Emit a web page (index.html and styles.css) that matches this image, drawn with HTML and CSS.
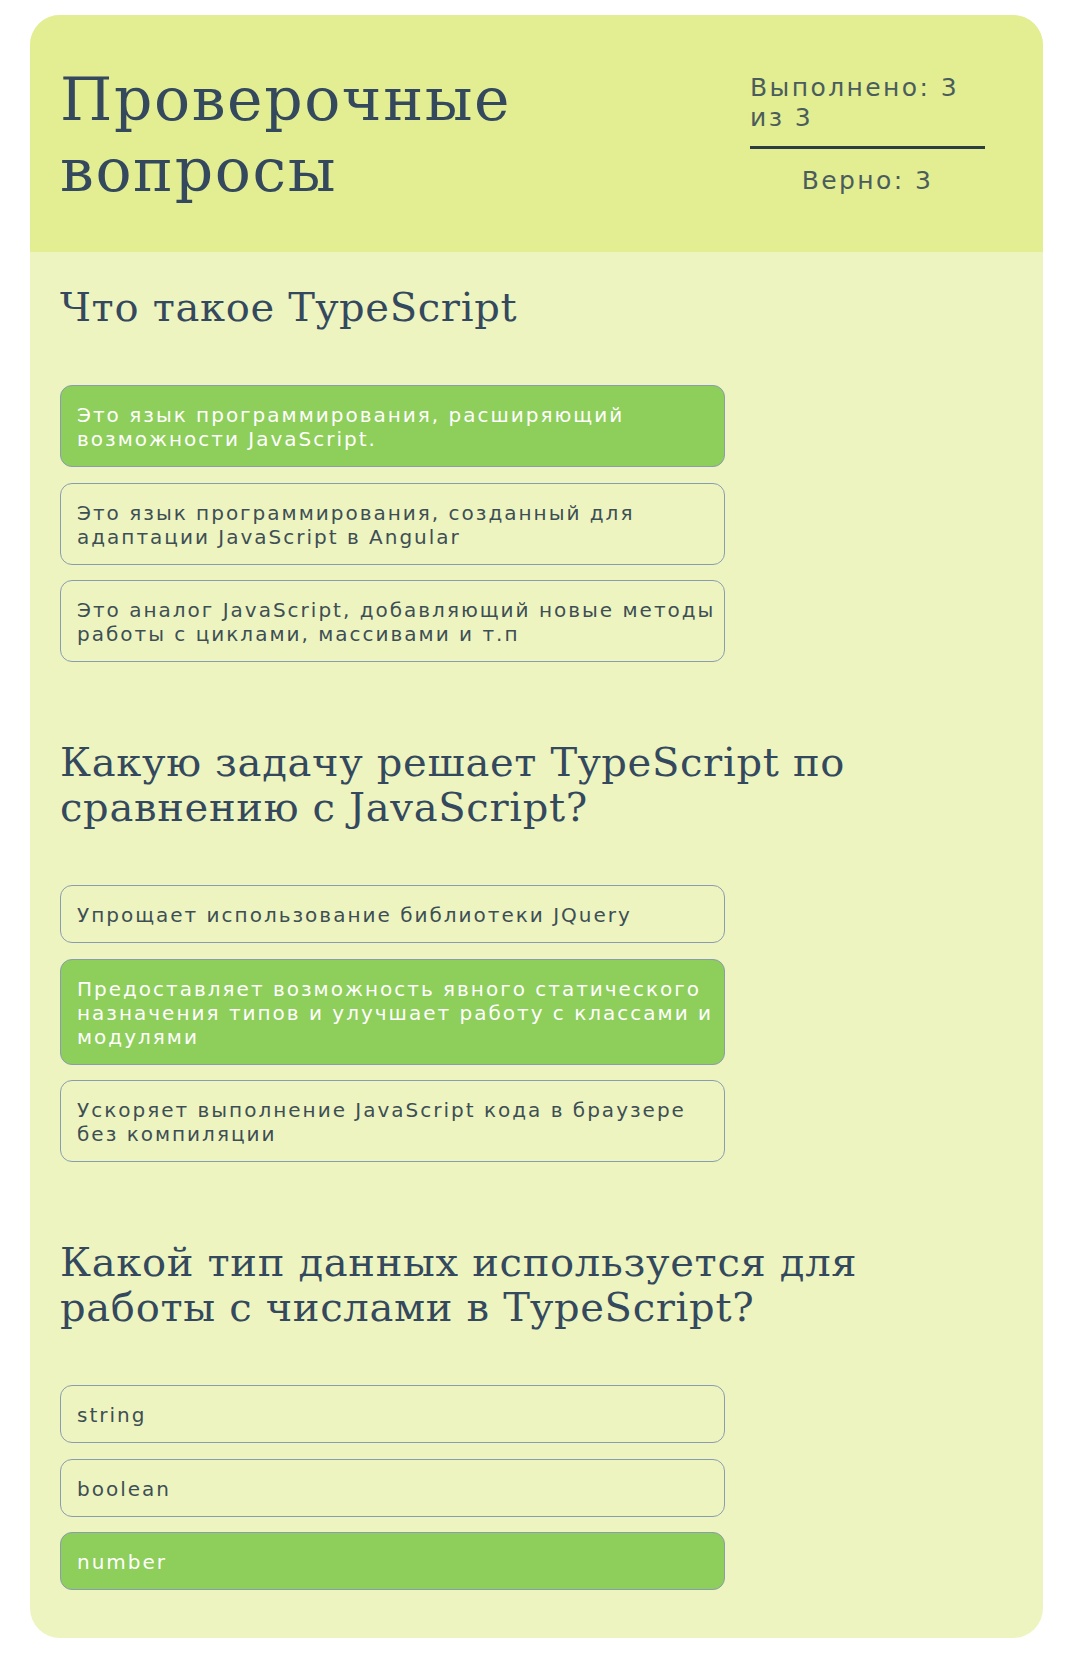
FILE: index.html
```html
<!DOCTYPE html>
<html lang="ru">
<head>
<meta charset="utf-8">
<title>Проверочные вопросы</title>
<link rel="stylesheet" href="styles.css">
</head>
<body>
<div class="card">
  <header class="card-header">
    <h1 class="title">Проверочные вопросы</h1>
    <div class="stats">
      <div class="stats-done">Выполнено: 3 из 3</div>
      <div class="stats-right">Верно: 3</div>
    </div>
  </header>
  <main class="questions">
    <section class="question">
      <h2 class="question-title">Что такое TypeScript</h2>
      <div class="options">
        <div class="option option-selected">Это язык программирования, расширяющий возможности JavaScript.</div>
        <div class="option">Это язык программирования, созданный для адаптации JavaScript в Angular</div>
        <div class="option">Это аналог JavaScript, добавляющий новые методы работы с циклами, массивами и т.п</div>
      </div>
    </section>
    <section class="question">
      <h2 class="question-title">Какую задачу решает TypeScript по сравнению с JavaScript?</h2>
      <div class="options">
        <div class="option">Упрощает использование библиотеки JQuery</div>
        <div class="option option-selected">Предоставляет возможность явного статического назначения типов и улучшает работу с классами и модулями</div>
        <div class="option">Ускоряет выполнение JavaScript кода в браузере без компиляции</div>
      </div>
    </section>
    <section class="question">
      <h2 class="question-title">Какой тип данных используется для работы с числами в TypeScript?</h2>
      <div class="options">
        <div class="option">string</div>
        <div class="option">boolean</div>
        <div class="option option-selected">number</div>
      </div>
    </section>
  </main>
</div>
</body>
</html>
```

FILE: styles.css
```css
* { box-sizing: border-box; }

body {
  margin: 0;
  padding: 15px 0 24px 30px;
  background: #ffffff;
  color: #34495e;
  font-family: "DejaVu Sans", sans-serif;
}

.card {
  width: 1013px;
  border-radius: 30px;
  overflow: hidden;
  background: #eef4bf;
}

.card-header {
  display: flex;
  justify-content: space-between;
  align-items: flex-start;
  background: #e3ed91;
  height: 237px;
  padding: 49px 58px 0 30px;
}

.title {
  margin: 0;
  font-family: "DejaVu Serif", serif;
  font-weight: 400;
  font-size: 60px;
  line-height: 71px;
  color: #34495e;
  letter-spacing: 1.6px;
}

.stats {
  flex: 0 0 235px;
  width: 235px;
  margin-top: 9px;
  font-family: "DejaVu Sans", sans-serif;
  font-size: 25px;
  line-height: 30px;
  letter-spacing: 2.4px;
  color: #4a5d5c;
}

.stats-done {
  padding-bottom: 13px;
  border-bottom: 3px solid #2c3e3f;
}

.stats-right {
  margin-top: 17px;
  text-align: center;
}

.questions {
  display: flex;
  flex-direction: column;
  gap: 78px;
  padding: 33px 30px 48px;
}

.question-title {
  max-width: 860px;
  margin: 0 0 55px;
  font-family: "DejaVu Serif", serif;
  font-weight: 400;
  font-size: 40px;
  line-height: 45px;
  color: #34495e;
  letter-spacing: 0.7px;
}

.options {
  display: flex;
  flex-direction: column;
  gap: 15.5px;
  width: 665px;
}

.option {
  border: 1px solid #8a9cb0;
  border-radius: 12px;
  padding: 17px 8px 15px 16px;
  font-family: "DejaVu Sans", sans-serif;
  font-size: 20px;
  line-height: 24px;
  letter-spacing: 2px;
  color: #3d4f55;
}

.option-selected {
  background: #8ece5a;
  color: #ffffff;
}
```
